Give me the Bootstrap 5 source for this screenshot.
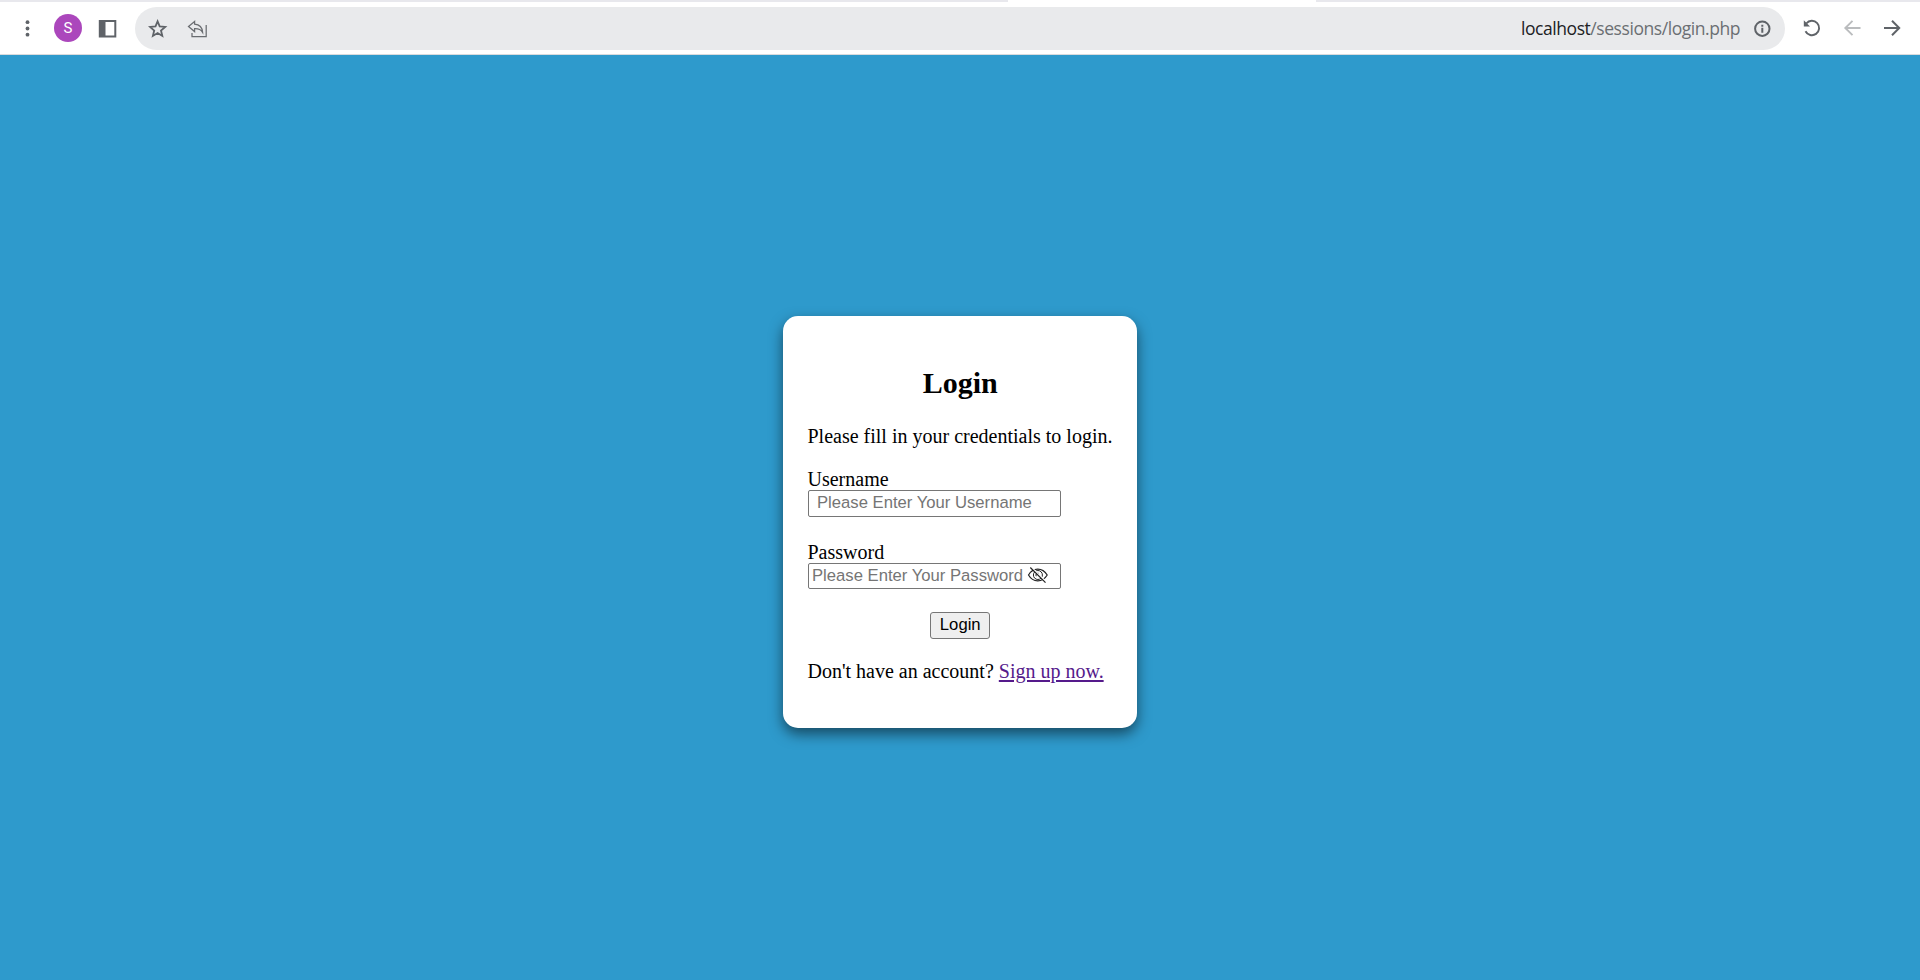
<!DOCTYPE html>
<html lang="en">
<head>
<meta charset="utf-8">
<title>Login</title>
<link href="https://cdn.jsdelivr.net/npm/bootstrap@5.3.0/dist/css/bootstrap.min.css" rel="stylesheet">
<script src="https://cdn.jsdelivr.net/npm/bootstrap@5.3.0/dist/js/bootstrap.bundle.min.js"></script>
<style>
html{background:#2e9acc}
body{background:#2e9acc;color:#000;font:20px/23px "Liberation Serif",serif;height:100vh;overflow:hidden}
.tabstrip{height:2px;background:#e8e8ed}
.active-tab{width:308px;height:2px;margin-left:1008px;background:#fff}
.toolbar{height:53px;background:#fff;border-bottom:1px solid #d9dbdd;padding:5px 0 4px 17px}
.toolbar svg{display:block;flex:none}
.avatar{width:28px;height:28px;background:#ab47bc;color:#fff;font:15px/29px Roboto,sans-serif;margin:0 14px 1px 15px}
.omnibox{width:1650px;height:43px;background:#e9eaec;margin-left:17px;padding:0 13px}
.url{font:17.5px/24px "Open Sans",sans-serif;letter-spacing:-.44px;color:#6b6f73;width:219px;margin-bottom:1px;white-space:nowrap}
.url b{font-weight:400;color:#202124}
.reload{margin:0 19px 2px 16px}
.forward{margin:0 0 2px 20px}
main{padding-top:261px}
.login-card{width:354px;height:412px;border:0;border-radius:15px;padding:50px 24px 45px 24.5px;box-shadow:0 6px 14px rgba(0,0,0,.52);color:#000}
.login-card h2{font:bold 30px/34px "Liberation Serif",serif;margin:0 0 25px}
.field{width:253px;height:27px;border:1px solid #767676;border-radius:2px;padding:0 3px 2px;font:16.67px/20px "Liberation Sans",sans-serif;display:block;background:#fff;outline:0}
.field::placeholder{color:#757575;opacity:1}
.user{padding-left:8.5px;margin:-1px 0 24px}
.pass{height:26px;padding-left:3.5px;padding-bottom:1px}
.pass-box{width:253px;margin:-1px 0 23px}
.eye{right:12px;top:2px}
.go{width:60px;height:27px;border:1px solid #767676;border-radius:3px;background:#efefef;font:16.67px/20px "Liberation Sans",sans-serif;padding:0 0 2px;margin-bottom:21px;color:#000}
.signup{color:#551a8b;text-decoration:underline;text-decoration-thickness:2px;text-underline-offset:2px}
</style>
</head>
<body>
<div class="tabstrip"><div class="active-tab"></div></div>
<header class="toolbar d-flex align-items-center">
  <svg width="22" height="22" fill="#5f6368"><circle cx="10.500" cy="4.200" r="1.900"/><circle cx="10.500" cy="10.500" r="1.900"/><circle cx="10.500" cy="16.700" r="1.900"/></svg>
  <div class="avatar rounded-circle text-center">S</div>
  <svg width="22" height="22"><path d="M3.800 3h15.500v15.500H3.800z" fill="none" stroke="#5f6368" stroke-width="2"/><path d="M3.500 3h6v15h-6z" fill="#5f6368"/></svg>
  <div class="omnibox rounded-pill d-flex align-items-center">
    <svg width="20" height="20" viewBox="0 0 20 20"><path d="M9.600 2.300 11.700 7.400 17.200 7.900 13 11.500 14.300 16.900 9.600 14.100 4.900 16.900 6.200 11.500 2 7.900 7.500 7.400Z" fill="none" stroke="#5f6368" stroke-width="1.800"/></svg>
    <svg width="22" height="20" viewBox="0 0 22 20" style="margin-left:19px"><path d="M7.600 2.400 1.500 7.400l6.100 5.200V9.700c3.800-.2 6.200.8 8 3.600-.3-4.600-3-7.600-8-8.100ZM5 14v3.500h14.200V6" fill="none" stroke="#696c70" stroke-width="1.250"/></svg>
    <div class="url ms-auto"><b>localhost</b>/sessions/login.php</div>
    <svg width="20" height="20" viewBox="0 0 20 20" style="margin-left:12px"><circle cx="10.300" cy="9.700" r="7.200" fill="none" stroke="#5f6368" stroke-width="2"/><path d="M9.300 8.800h2v5h-2zM9.300 5.800h2v1.900h-2z" fill="#5f6368"/></svg>
  </div>
  <svg class="reload" width="22" height="22" viewBox="0 0 22 22"><path d="M4.500 14.200A7.200 7.200 0 1 0 5.300 6.500" fill="none" stroke="#5f6368" stroke-width="1.900"/><path d="M2.800 3.200v6.200H9z" fill="#5f6368"/></svg>
  <svg width="20" height="20" viewBox="0 0 20 20" class="mb-1"><path d="M18.500 11H3.500M10.500 3.800 3.300 11l7.200 7.200" fill="none" stroke="#babcbe" stroke-width="1.900"/></svg>
  <svg class="forward" width="20" height="20" viewBox="0 0 20 20"><path d="M2 10h15M10 2.800l7.200 7.200-7.200 7.200" fill="none" stroke="#5f6368" stroke-width="2"/></svg>
</header>
<main class="d-flex justify-content-center">
  <form class="card login-card">
    <h2 class="text-center">Login</h2>
    <p class="text-nowrap" style="margin-bottom:20px">Please fill in your credentials to login.</p>
    <label for="u">Username</label>
    <input id="u" class="field user" type="text" placeholder="Please Enter Your Username">
    <label for="p">Password</label>
    <div class="pass-box position-relative">
      <input id="p" class="field pass" type="password" placeholder="Please Enter Your Password">
      <svg class="eye position-absolute" width="22" height="20" viewBox="0 0 22 20" fill="none" stroke="#222" stroke-width="1.200"><path d="M1.500 10C6 2.200 15.500 2.200 20.200 10 15.500 17.800 6 17.800 1.500 10Z"/><circle cx="10.900" cy="10" r="4.500" stroke-width="1"/><path d="M9.300 11.200a1.900 1.900 0 0 1 2.600-2.700" stroke-width="1"/><path d="M4.200 2 19 16.700" stroke="#fff" stroke-width="1.400"/><path d="M3.300 2.500 18.500 17.600"/></svg>
    </div>
    <button class="go align-self-center" type="button">Login</button>
    <p class="mb-0 text-nowrap">Don't have an account? <a class="signup" href="#">Sign up now.</a></p>
  </form>
</main>
</body>
</html>
